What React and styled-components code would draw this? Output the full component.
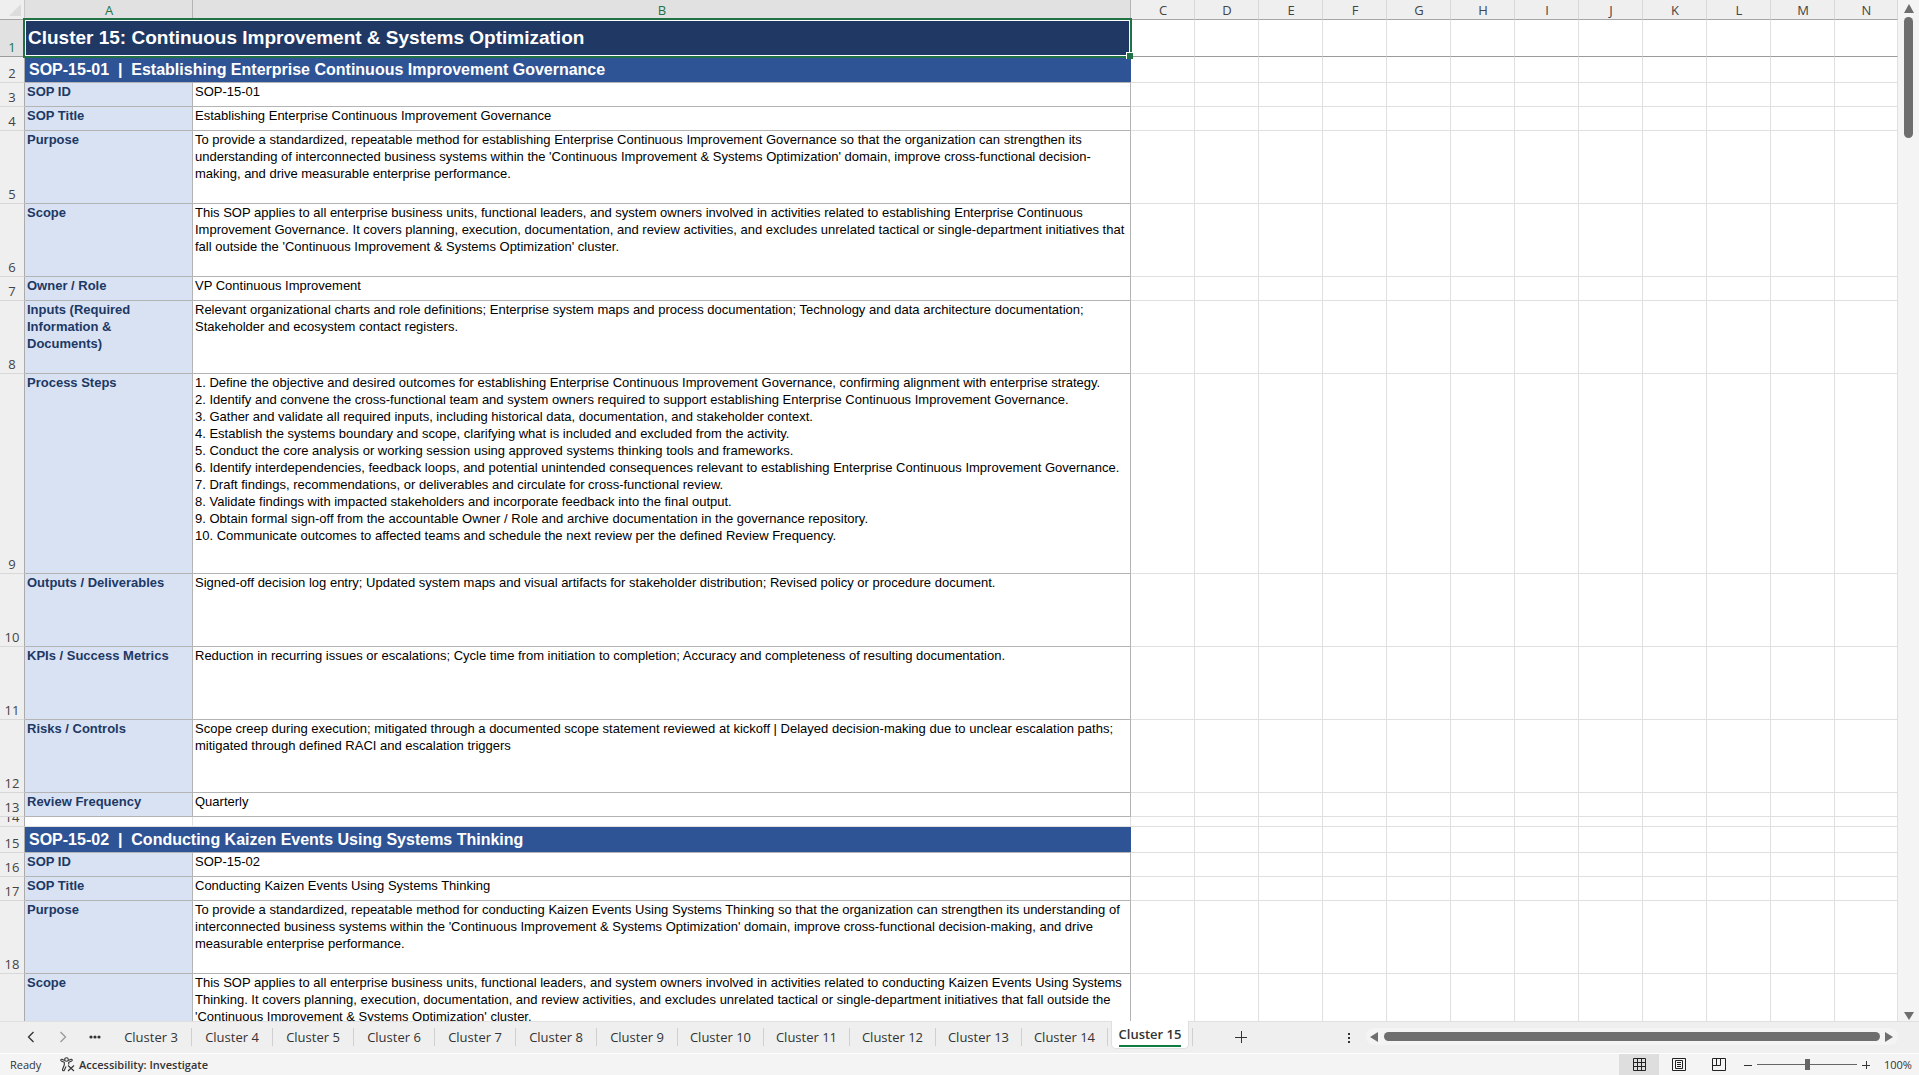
import React from "react";
import styled, { createGlobalStyle } from "styled-components";

const GlobalStyle = createGlobalStyle`
  * {
    box-sizing: border-box;
  }
  body {
    margin: 0;
    overflow: hidden;
  }
  button {
    padding: 0;
    border: 0;
    background: none;
    font: inherit;
    color: inherit;
    cursor: pointer;
  }
`;

const App = () => {
  const columns = ["A", "B", "C", "D", "E", "F", "G", "H", "I", "J", "K", "L", "M", "N"];
  const emptyColumns = columns.slice(2);

  return (
    <Page>
      <GlobalStyle />
      <Workspace>
        <SheetArea>
          <Sheet>
            <colgroup>
              <Col $width={25} />
              <Col $width={168} />
              <Col $width={938} />
              {emptyColumns.slice(0, -1).map(name => (
                <Col key={name} $width={64} />
              ))}
              <col />
            </colgroup>
            <thead>
              <tr>
                <Corner aria-label="Select all">
                  <svg width="12" height="12" viewBox="0 0 12 12">
                    <path d="M12 0V12H0Z" fill="#dcdcdc" />
                  </svg>
                </Corner>
                {columns.map((name, i) => (
                  <ColumnHead key={name} $active={i < 2}>
                    {name}
                  </ColumnHead>
                ))}
              </tr>
            </thead>
            <tbody>
              {rows.map((row, i) => (
                <Row key={i} $height={row.height}>
                  <RowHead $active={i === 0} $frozen={i === 0} $clipped={row.height < 12}>
                    <span>{i + 1}</span>
                  </RowHead>
                  {row.kind === "title" && (
                    <TitleCell colSpan={2}>
                      {row.text}
                      <Selection />
                    </TitleCell>
                  )}
                  {row.kind === "section" && <SectionCell colSpan={2}>{row.text}</SectionCell>}
                  {row.kind === "gap" && (
                    <>
                      <EmptyCell />
                      <EmptyCell />
                    </>
                  )}
                  {row.kind === "field" && (
                    <>
                      <LabelCell>{row.label}</LabelCell>
                      <ValueCell>{row.text}</ValueCell>
                    </>
                  )}
                  {emptyColumns.map(name => (
                    <EmptyCell key={name} $frozen={i === 0} />
                  ))}
                </Row>
              ))}
            </tbody>
          </Sheet>
        </SheetArea>
        <VerticalBar>
          <Arrow d="M5 0L10 9H0Z" label="Scroll up" />
          <VerticalThumb />
          <Spacer />
          <Arrow d="M0 1H10L5 9Z" label="Scroll down" />
        </VerticalBar>
      </Workspace>

      <TabStrip>
        <TabNav>
          <IconButton aria-label="Previous sheet">
            <svg width="8" height="12" viewBox="0 0 8 12" fill="none" stroke="#333" strokeWidth="1.3">
              <path d="M6.500 1L1.500 6L6.500 11" />
            </svg>
          </IconButton>
          <IconButton aria-label="Next sheet">
            <svg width="8" height="12" viewBox="0 0 8 12" fill="none" stroke="#999" strokeWidth="1.3">
              <path d="M1.500 1L6.500 6L1.500 11" />
            </svg>
          </IconButton>
          <IconButton aria-label="More sheets">
            <svg width="12" height="4" viewBox="0 0 12 4" fill="#333">
              <circle cx="2" cy="2" r="1.600" />
              <circle cx="6" cy="2" r="1.600" />
              <circle cx="10" cy="2" r="1.600" />
            </svg>
          </IconButton>
        </TabNav>
        {tabs.map(n => (
          <Tab key={n} $wide={n > 9}>
            Cluster {n}
          </Tab>
        ))}
        <ActiveTab>
          <span>Cluster 15</span>
        </ActiveTab>
        <AddTab aria-label="New sheet">
          <svg width="12" height="12" viewBox="0 0 12 12" stroke="#333">
            <path d="M6.500 0V12M0 6.500H12" />
          </svg>
        </AddTab>
        <Spacer />
        <Grip width="2" height="10" viewBox="0 0 2 10" fill="#333">
          <path d="M0 0H2V2H0ZM0 4H2V6H0ZM0 8H2V10H0Z" />
        </Grip>
        <HorizontalBar>
          <Arrow d="M8 0V10L0 5Z" label="Scroll left" />
          <HorizontalThumb />
          <Arrow d="M1 0V10L9 5Z" label="Scroll right" />
        </HorizontalBar>
      </TabStrip>

      <StatusBar>
        <Ready>Ready</Ready>
        <Accessibility>
          <svg width="15" height="15" viewBox="0 0 15 15" fill="none" stroke="#333" strokeWidth="1.1">
            <circle cx="6.500" cy="2.500" r="1.800" />
            <path d="M4.700 3.400L2 2.300C1 2 0.300 3.300 1.300 3.900L4.300 5.300V8L2.500 12.500C2.300 13.900 3.900 14.200 4.300 13.200L6 9.500M8.300 3.400L11 2.300C12 2 12.700 3.300 11.700 3.900L8.700 5.300V7.500" />
            <path d="M8 8.500L14 14M14 8.500L8 14" />
          </svg>
          Accessibility: Investigate
        </Accessibility>
        <Spacer />
        <ViewButton $active aria-label="Normal">
          <svg width="13" height="13" viewBox="0 0 13 13" fill="none" stroke="#222">
            <path d="M0.500 0.500H12.500V12.500H0.500ZM4.500 0V13M8.500 0V13M0 4.500H13M0 8.500H13" />
          </svg>
        </ViewButton>
        <ViewButton aria-label="Page layout">
          <svg width="14" height="13" viewBox="0 0 14 13" fill="none" stroke="#222">
            <path d="M0.500 0.500H13.500V12.500H0.500ZM3.500 2.500H10.500V10.500H3.500ZM5 4.500H9M5 6.500H9M5 8.500H9" />
          </svg>
        </ViewButton>
        <ViewButton aria-label="Page break preview">
          <svg width="14" height="13" viewBox="0 0 14 13" fill="none" stroke="#222">
            <path d="M0.500 0.500H13.500V12.500H0.500ZM4.500 0V7.500M0.500 7.500H8.500V0" />
          </svg>
        </ViewButton>
        <ZoomButton aria-label="Zoom out">
          <svg width="8" height="8" viewBox="0 0 8 8" stroke="#333">
            <path d="M0 4.500H8" />
          </svg>
        </ZoomButton>
        <ZoomSlider type="range" min="0" max="200" defaultValue="100" aria-label="Zoom" />
        <ZoomButton aria-label="Zoom in">
          <svg width="8" height="8" viewBox="0 0 8 8" stroke="#333">
            <path d="M0 4.500H8M4.500 0V8" />
          </svg>
        </ZoomButton>
        <Percent>100%</Percent>
      </StatusBar>
    </Page>
  );
};

const Arrow = ({ d, label }) => (
  <ArrowButton aria-label={label}>
    <svg width="10" height="10" viewBox="0 0 10 10" fill="#6e6e6e">
      <path d={d} />
    </svg>
  </ArrowButton>
);

const tabs = [3, 4, 5, 6, 7, 8, 9, 10, 11, 12, 13, 14];

const field = (label, text, height = 24) => ({ kind: "field", label, text, height });

// line breaks are kept where the sheet wraps the cell
const rows = [
  {
    kind: "title",
    text: "Cluster 15: Continuous Improvement & Systems Optimization",
    height: 37
  },
  {
    kind: "section",
    text: "SOP-15-01  |  Establishing Enterprise Continuous Improvement Governance",
    height: 26
  },
  field("SOP ID", "SOP-15-01"),
  field("SOP Title", "Establishing Enterprise Continuous Improvement Governance"),
  field(
    "Purpose",
    `To provide a standardized, repeatable method for establishing Enterprise Continuous Improvement Governance so that the organization can strengthen its
understanding of interconnected business systems within the 'Continuous Improvement & Systems Optimization' domain, improve cross-functional decision-
making, and drive measurable enterprise performance.`,
    73
  ),
  field(
    "Scope",
    `This SOP applies to all enterprise business units, functional leaders, and system owners involved in activities related to establishing Enterprise Continuous
Improvement Governance. It covers planning, execution, documentation, and review activities, and excludes unrelated tactical or single-department initiatives that
fall outside the 'Continuous Improvement & Systems Optimization' cluster.`,
    73
  ),
  field("Owner / Role", "VP Continuous Improvement"),
  field(
    `Inputs (Required
Information &
Documents)`,
    `Relevant organizational charts and role definitions; Enterprise system maps and process documentation; Technology and data architecture documentation;
Stakeholder and ecosystem contact registers.`,
    73
  ),
  field(
    "Process Steps",
    `1. Define the objective and desired outcomes for establishing Enterprise Continuous Improvement Governance, confirming alignment with enterprise strategy.
2. Identify and convene the cross-functional team and system owners required to support establishing Enterprise Continuous Improvement Governance.
3. Gather and validate all required inputs, including historical data, documentation, and stakeholder context.
4. Establish the systems boundary and scope, clarifying what is included and excluded from the activity.
5. Conduct the core analysis or working session using approved systems thinking tools and frameworks.
6. Identify interdependencies, feedback loops, and potential unintended consequences relevant to establishing Enterprise Continuous Improvement Governance.
7. Draft findings, recommendations, or deliverables and circulate for cross-functional review.
8. Validate findings with impacted stakeholders and incorporate feedback into the final output.
9. Obtain formal sign-off from the accountable Owner / Role and archive documentation in the governance repository.
10. Communicate outcomes to affected teams and schedule the next review per the defined Review Frequency.`,
    200
  ),
  field(
    "Outputs / Deliverables",
    "Signed-off decision log entry; Updated system maps and visual artifacts for stakeholder distribution; Revised policy or procedure document.",
    73
  ),
  field(
    "KPIs / Success Metrics",
    "Reduction in recurring issues or escalations; Cycle time from initiation to completion; Accuracy and completeness of resulting documentation.",
    73
  ),
  field(
    "Risks / Controls",
    `Scope creep during execution; mitigated through a documented scope statement reviewed at kickoff | Delayed decision-making due to unclear escalation paths;
mitigated through defined RACI and escalation triggers`,
    73
  ),
  field("Review Frequency", "Quarterly"),
  { kind: "gap", height: 10 },
  {
    kind: "section",
    text: "SOP-15-02  |  Conducting Kaizen Events Using Systems Thinking",
    height: 26
  },
  field("SOP ID", "SOP-15-02"),
  field("SOP Title", "Conducting Kaizen Events Using Systems Thinking"),
  field(
    "Purpose",
    `To provide a standardized, repeatable method for conducting Kaizen Events Using Systems Thinking so that the organization can strengthen its understanding of
interconnected business systems within the 'Continuous Improvement & Systems Optimization' domain, improve cross-functional decision-making, and drive
measurable enterprise performance.`,
    73
  ),
  field(
    "Scope",
    `This SOP applies to all enterprise business units, functional leaders, and system owners involved in activities related to conducting Kaizen Events Using Systems
Thinking. It covers planning, execution, documentation, and review activities, and excludes unrelated tactical or single-department initiatives that fall outside the
'Continuous Improvement & Systems Optimization' cluster.`,
    73
  )
];

const Page = styled.div`
  display: flex;
  flex-direction: column;
  height: 100vh;
  overflow: hidden;
  background: #efefef;
  color: #333;
  font-family: "Open Sans", "Noto Sans", sans-serif;
`;

const Workspace = styled.div`
  flex: 1;
  min-height: 0;
  display: flex;
`;

const SheetArea = styled.main`
  flex: 1;
  min-width: 0;
  overflow: hidden;
  background: #fff;
`;

const Sheet = styled.table`
  width: 100%;
  table-layout: fixed;
  border-collapse: separate;
  border-spacing: 0;
`;

const Col = styled.col`
  width: ${props => props.$width}px;
`;

const Corner = styled.th`
  height: 20px;
  padding: 0 3px 0 0;
  background: #efefef;
  border-right: 1px solid #c8c8c8;
  border-bottom: 1px solid #a6a6a6;
  svg {
    display: block;
    margin-left: auto;
  }
`;

const ColumnHead = styled.th`
  height: 20px;
  padding: 2px 0 0 1px;
  background: ${props => (props.$active ? "#e1e1e1" : "#efefef")};
  color: ${props => (props.$active ? "#217346" : "#444")};
  border-right: 1px solid ${props => (props.$active ? "#b4b4b4" : "#d8d8d8")};
  border-bottom: 1px solid #a6a6a6;
  font-size: 13px;
  line-height: 17px;
  font-weight: 400;
`;

const Row = styled.tr`
  height: ${props => props.$height}px;
`;

const RowHead = styled.th`
  padding: 0 0 1px;
  background: ${props => (props.$active ? "#e1e1e1" : "#efefef")};
  color: ${props => (props.$active ? "#217346" : "#444")};
  border-right: 1px solid #ababab;
  border-bottom: 1px solid ${props => (props.$frozen ? "#9b9b9b" : "#d8d8d8")};
  font-size: 13px;
  font-weight: 400;
  line-height: 16px;
  vertical-align: bottom;
  span {
    display: flex;
    align-items: flex-end;
    justify-content: center;
    height: ${props => (props.$clipped ? "8px" : "auto")};
    overflow: hidden;
  }
`;

const Cell = styled.td`
  padding: 0 2px;
  vertical-align: top;
  font-family: "Liberation Sans", Arial, sans-serif;
  font-size: 13px;
  line-height: 17px;
  white-space: pre;
`;

const TitleCell = styled(Cell)`
  position: relative;
  padding: 0 3px;
  background: #203864;
  border-bottom: 1px solid #9b9b9b;
  color: #fff;
  font-size: 19px;
  line-height: 36px;
  font-weight: 700;
`;

const SectionCell = styled(Cell)`
  padding: 0 4px;
  background: #2f5496;
  border-bottom: 1px solid #b4b4b4;
  color: #fff;
  font-size: 16px;
  line-height: 25px;
  font-weight: 700;
`;

const LabelCell = styled(Cell)`
  background: #d9e2f3;
  border-right: 1px solid #b4b4b4;
  border-bottom: 1px solid #b4b4b4;
  color: #203864;
  font-weight: 700;
`;

const ValueCell = styled(Cell)`
  border-right: 1px solid #b4b4b4;
  border-bottom: 1px solid #b4b4b4;
  color: #000;
`;

const EmptyCell = styled.td`
  padding: 0;
  border-right: 1px solid #e0e0e0;
  border-bottom: 1px solid ${props => (props.$frozen ? "#9b9b9b" : "#e0e0e0")};
`;

// green frame lying over the selected cell
const Selection = styled.div`
  position: absolute;
  inset: -2px -1px -2px -2px;
  border: 2px solid #217346;
  box-shadow: inset 0 0 0 1px #fff;
  pointer-events: none;
  &::after {
    content: "";
    position: absolute;
    right: -3px;
    bottom: -3px;
    width: 6px;
    height: 6px;
    background: #217346;
    border: solid #fff;
    border-width: 1px 0 0 1px;
  }
`;

const VerticalBar = styled.div`
  width: 21px;
  display: flex;
  flex-direction: column;
  align-items: center;
  padding: 4px 0 0;
  background: #f4f4f4;
`;

const ArrowButton = styled.button`
  display: flex;
  width: 10px;
  height: 10px;
`;

const VerticalThumb = styled.div`
  width: 9px;
  height: 121px;
  margin-top: 3px;
  border-radius: 5px;
  background: #6e6e6e;
`;

const Spacer = styled.div`
  flex: 1;
`;

const TabStrip = styled.nav`
  display: flex;
  height: 33px;
  border-top: 1px solid #e0e0e0;
  border-bottom: 1px solid #fff;
  background: #efefef;
  font-size: 13px;
`;

const TabNav = styled.div`
  display: flex;
  align-items: center;
  width: 111px;
  padding: 0 0 2px 15px;
`;

const IconButton = styled.button`
  display: flex;
  align-items: center;
  justify-content: center;
  width: 32px;
  height: 24px;
`;

const Tab = styled.button`
  width: ${props => (props.$wide ? 86 : 81)}px;
  height: 18px;
  margin-top: 6px;
  border-right: 1px solid #d0d0d0;
  line-height: 18px;
  white-space: nowrap;
`;

const ActiveTab = styled.button`
  display: flex;
  justify-content: center;
  width: 78px;
  height: 28px;
  margin: -1px 3px 0;
  padding-top: 2px;
  border: 1px solid #e0e0e0;
  border-top: 0;
  border-radius: 0 0 5px 5px;
  background: #fff;
  font-weight: 600;
  line-height: 22px;
  white-space: nowrap;
  span {
    height: 24px;
    border-bottom: 2px solid #107c41;
  }
`;

const AddTab = styled.button`
  display: flex;
  align-items: center;
  justify-content: center;
  width: 96px;
  height: 18px;
  margin-top: 6px;
  border-left: 1px solid #d0d0d0;
`;

const Grip = styled.svg`
  margin: 11px 16px 0 0;
`;

const HorizontalBar = styled.div`
  display: flex;
  align-items: center;
  width: 532px;
  height: 17px;
  margin: 6px 21px 0 0;
  padding: 0 4px;
  border-radius: 8px;
  background: #f4f4f4;
`;

const HorizontalThumb = styled.div`
  flex: 1;
  height: 9px;
  margin: 0 4px;
  border-radius: 5px;
  background: #6e6e6e;
`;

const StatusBar = styled.footer`
  display: flex;
  align-items: center;
  height: 21px;
  background: #f4f4f4;
  font-size: 11px;
`;

const Ready = styled.span`
  width: 60px;
  padding-left: 10px;
`;

const Accessibility = styled.button`
  display: flex;
  align-items: center;
  gap: 4px;
  font-weight: 600;
`;

const ViewButton = styled.button`
  display: flex;
  align-items: center;
  justify-content: center;
  width: 40px;
  height: 21px;
  background: ${props => (props.$active ? "#dedede" : "none")};
`;

const ZoomButton = styled.button`
  display: flex;
  align-items: center;
  justify-content: center;
  width: 18px;
  height: 21px;
`;

const ZoomSlider = styled.input`
  appearance: none;
  width: 100px;
  height: 21px;
  margin: 0;
  background: linear-gradient(#666, #666) center / 100% 1px no-repeat;
  &::-webkit-slider-thumb {
    appearance: none;
    width: 5px;
    height: 11px;
    background: #666;
  }
`;

const Percent = styled.span`
  width: 44px;
  padding-left: 9px;
`;

export default App;
